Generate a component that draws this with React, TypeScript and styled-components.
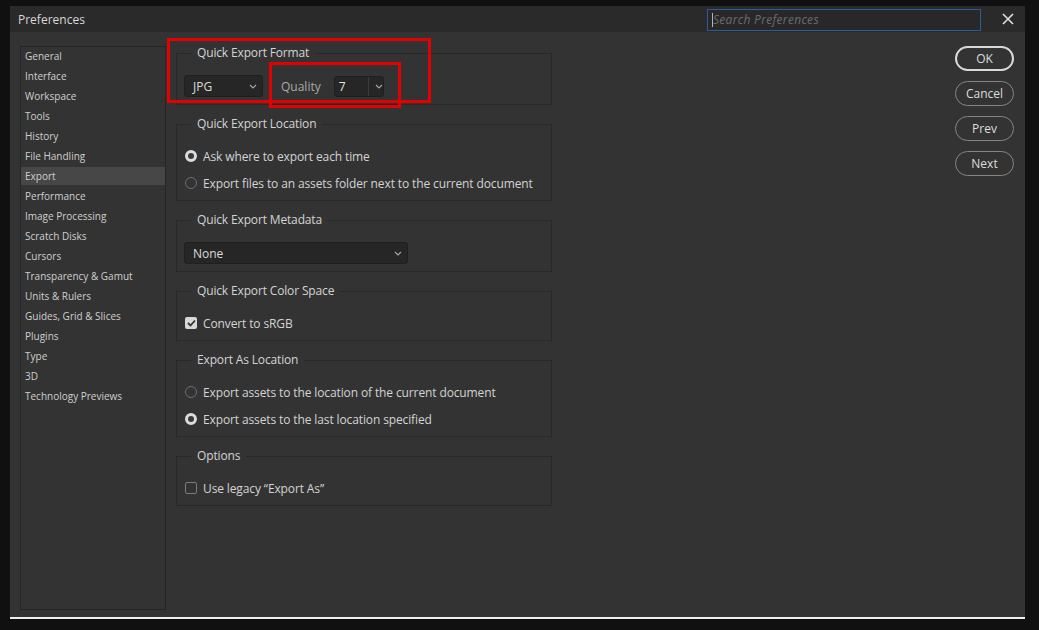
import React from "react";
import styled, { createGlobalStyle } from "styled-components";

const GlobalStyle = createGlobalStyle`
	html, body {
		margin: 0;
		padding: 0;
		background: #101010;
		font-family: "Open Sans", "Noto Sans", sans-serif;
	}
`;

const Page = styled.div`
	width: 1039px;
	height: 630px;
	padding: 6px 0 0 10px;
	box-sizing: border-box;
`;

const Dialog = styled.div`
	position: relative;
	width: 1015px;
	height: 613px;
	background: #333333;
	border-bottom: 2px solid #f0f0f0;
	box-sizing: border-box;
	display: flex;
	flex-direction: column;
`;

const TitleBar = styled.div`
	height: 26px;
	flex: none;
	background: #2a2a2a;
	display: flex;
	align-items: center;
	padding: 0 11px 0 8px;
`;

const Title = styled.div`
	font-size: 12px;
	color: #d8d8d8;
`;

const Search = styled.div`
	margin-left: auto;
	width: 274px;
	height: 22px;
	box-sizing: border-box;
	border: 1px solid #2d5d98;
	background: #282828;
	display: flex;
	align-items: center;
	padding-left: 4px;
	margin-top: 1px;
`;

const Caret = styled.span`
	width: 1px;
	height: 14px;
	background: #b5b5b5;
`;

const Placeholder = styled.span`
	font-size: 12px;
	font-style: italic;
	color: #6c6c6c;
	letter-spacing: 0.3px;
`;

const CloseBtn = styled.div`
	margin-left: 21px;
	width: 12px;
	height: 12px;
	display: flex;
`;

const Body = styled.div`
	flex: 1;
	display: flex;
	padding: 13px 11px 0 10px;
	min-height: 0;
`;

const Sidebar = styled.div`
	width: 146px;
	height: 564px;
	margin-top: 1px;
	box-sizing: border-box;
	border: 1px solid #262626;
	display: flex;
	flex-direction: column;
	gap: 2px;
	flex: none;
`;

const NavItem = styled.div<{ $active?: boolean }>`
	height: 18px;
	display: flex;
	align-items: center;
	padding-left: 4px;
	font-size: 10px;
	color: #cfcfcf;
	background: ${(p) => (p.$active ? "#474747" : "transparent")};
`;

const Content = styled.div`
	width: 376px;
	margin-left: 10px;
	display: flex;
	flex-direction: column;
	gap: 11px;
	flex: none;
`;

const Group = styled.fieldset`
	margin: 0;
	border: 1px solid #282828;
	padding: 14px 7px 7px 7px;
	display: flex;
	flex-direction: column;
	gap: 7px;
	min-width: 0;
`;

const Legend = styled.legend`
	margin-left: 7px;
	padding: 0 6px;
	font-size: 12px;
	line-height: 16px;
	color: #d4d4d4;
	letter-spacing: -0.15px;
`;

const Row = styled.div`
	display: flex;
	align-items: center;
	min-height: 20px;
`;

const Select = styled.div<{ $w: number }>`
	width: ${(p) => p.$w}px;
	height: 22px;
	box-sizing: border-box;
	background: #262626;
	border: 1px solid #1f1f1f;
	border-radius: 3px;
	display: flex;
	align-items: center;
	padding: 0 5px 0 8px;
	font-size: 12px;
	color: #dadada;
`;

const Chevron = styled.svg`
	margin-left: auto;
	flex: none;
`;

const FieldLabel = styled.span`
	margin-left: 18px;
	font-size: 12px;
	color: #a9a9a9;
`;

const NumberBox = styled.div`
	margin-left: 13px;
	width: 50px;
	height: 21px;
	box-sizing: border-box;
	background: #262626;
	border: 1px solid #1f1f1f;
	border-radius: 3px;
	display: flex;
	align-items: stretch;
	font-size: 12px;
	color: #e4e4e4;
`;

const NumberValue = styled.div`
	width: 34px;
	display: flex;
	align-items: center;
	padding-left: 4px;
	box-sizing: border-box;
	border-right: 1px solid #3c3c3c;
`;

const NumberArrow = styled.div`
	flex: 1;
	display: flex;
	align-items: center;
	justify-content: center;
`;

const Radio = styled.span<{ $on?: boolean }>`
	width: 12px;
	height: 12px;
	box-sizing: border-box;
	border-radius: 50%;
	margin-left: 1px;
	flex: none;
	border: ${(p) => (p.$on ? "3.5px solid #dcdcdc" : "1px solid #6e6e6e")};
	background: ${(p) => (p.$on ? "#3a3a3a" : "transparent")};
`;

const Check = styled.span<{ $on?: boolean }>`
	width: 12px;
	height: 12px;
	box-sizing: border-box;
	border-radius: 2px;
	margin-left: 1px;
	flex: none;
	display: flex;
	align-items: center;
	justify-content: center;
	background: ${(p) => (p.$on ? "#d8d8d8" : "transparent")};
	border: ${(p) => (p.$on ? "none" : "1px solid #7a7a7a")};
`;

const OptionText = styled.span`
	margin-left: 6px;
	font-size: 12px;
	color: #d4d4d4;
	letter-spacing: -0.12px;
`;

const Buttons = styled.div`
	margin-left: auto;
	padding-top: 1px;
	display: flex;
	flex-direction: column;
	gap: 10px;
`;

const PillButton = styled.div<{ $primary?: boolean }>`
	width: 59px;
	height: 25px;
	box-sizing: border-box;
	border-radius: 13px;
	border: ${(p) => (p.$primary ? "2px solid #d9d9d9" : "1.5px solid #868686")};
	display: flex;
	align-items: center;
	justify-content: center;
	font-size: 12px;
	color: #dedede;
`;

const Highlight = styled.div<{ $x: number; $y: number; $w: number; $h: number }>`
	position: absolute;
	left: ${(p) => p.$x}px;
	top: ${(p) => p.$y}px;
	width: ${(p) => p.$w}px;
	height: ${(p) => p.$h}px;
	box-sizing: border-box;
	border: 3px solid #e30000;
	pointer-events: none;
`;

const ChevronDown = () => (
	<Chevron width="8" height="5" viewBox="0 0 8 5">
		<path d="M1 1 L4 4 L7 1" fill="none" stroke="#a8a8a8" strokeWidth="1.1" />
	</Chevron>
);

const navItems = [
	"General",
	"Interface",
	"Workspace",
	"Tools",
	"History",
	"File Handling",
	"Export",
	"Performance",
	"Image Processing",
	"Scratch Disks",
	"Cursors",
	"Transparency & Gamut",
	"Units & Rulers",
	"Guides, Grid & Slices",
	"Plugins",
	"Type",
	"3D",
	"Technology Previews",
];

export default function App() {
	return (
		<Page>
			<GlobalStyle />
			<Dialog>
				<TitleBar>
					<Title>Preferences</Title>
					<Search>
						<Caret />
						<Placeholder>Search Preferences</Placeholder>
					</Search>
					<CloseBtn>
						<svg width="12" height="12" viewBox="0 0 12 12">
							<path d="M1 1 L11 11 M11 1 L1 11" stroke="#e0e0e0" strokeWidth="1.6" />
						</svg>
					</CloseBtn>
				</TitleBar>
				<Body>
					<Sidebar>
						{navItems.map((item) => (
							<NavItem key={item} $active={item === "Export"}>
								{item}
							</NavItem>
						))}
					</Sidebar>
					<Content>
						<Group>
							<Legend>Quick Export Format</Legend>
							<Row>
								<Select $w={79}>
									JPG
									<ChevronDown />
								</Select>
								<FieldLabel>Quality</FieldLabel>
								<NumberBox>
									<NumberValue>7</NumberValue>
									<NumberArrow>
										<ChevronDown />
									</NumberArrow>
								</NumberBox>
							</Row>
						</Group>
						<Group>
							<Legend>Quick Export Location</Legend>
							<Row>
								<Radio $on />
								<OptionText>Ask where to export each time</OptionText>
							</Row>
							<Row>
								<Radio />
								<OptionText>Export files to an assets folder next to the current document</OptionText>
							</Row>
						</Group>
						<Group>
							<Legend>Quick Export Metadata</Legend>
							<Row>
								<Select $w={224}>
									None
									<ChevronDown />
								</Select>
							</Row>
						</Group>
						<Group>
							<Legend>Quick Export Color Space</Legend>
							<Row>
								<Check $on>
									<svg width="9" height="8" viewBox="0 0 9 8">
										<path d="M1 4 L3.5 6.5 L8 1.5" fill="none" stroke="#333" strokeWidth="1.8" />
									</svg>
								</Check>
								<OptionText>Convert to sRGB</OptionText>
							</Row>
						</Group>
						<Group>
							<Legend>Export As Location</Legend>
							<Row>
								<Radio />
								<OptionText>Export assets to the location of the current document</OptionText>
							</Row>
							<Row>
								<Radio $on />
								<OptionText>Export assets to the last location specified</OptionText>
							</Row>
						</Group>
						<Group>
							<Legend>Options</Legend>
							<Row>
								<Check />
								<OptionText>Use legacy “Export As”</OptionText>
							</Row>
						</Group>
					</Content>
					<Buttons>
						<PillButton $primary>OK</PillButton>
						<PillButton>Cancel</PillButton>
						<PillButton>Prev</PillButton>
						<PillButton>Next</PillButton>
					</Buttons>
				</Body>
				<Highlight $x={157} $y={32} $w={264} $h={65} />
				<Highlight $x={259} $y={56} $w={132} $h={46} />
			</Dialog>
		</Page>
	);
}
